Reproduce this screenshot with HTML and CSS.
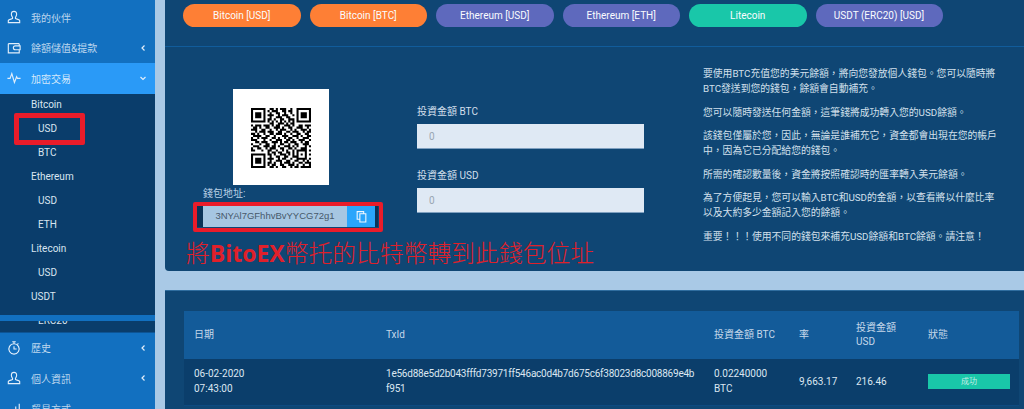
FILE: index.html
```html
<!DOCTYPE html>
<html>
	<head>
		<title>Litecoin</title>
		<meta name="viewport" content="width=device-width, initial-scale=1.0"/>
		<link rel="stylesheet" href="styles.css">
	</head>
	<body>
		<nav class="sidebar">
			<a class="nav-item">
				<svg class="nav-icon" viewBox="0 0 16 16"><path d="M8 1.500c-2 0-3 1.500-3 3.300 0 1.700.8 2.800 1.300 3.500v1.400c-1 .7-4.300 1.100-4.800 2.300v2.500h13v-2.500c-.5-1.200-3.800-1.600-4.800-2.300V8.300c.5-.7 1.300-1.800 1.300-3.500 0-1.800-1-3.300-3-3.300z"/></svg>
				<span>我的伙伴</span>
			</a>
			<a class="nav-item">
				<svg class="nav-icon" viewBox="0 0 16 16"><path d="M1.500 3h12.500M1.500 3v10.500h12.500V10M14 3v2.500M14 5.500H9.500a2.200 2.200 0 0 0 0 4.500H15V5.500z"/></svg>
				<span>餘額儲值&amp;提款</span>
				<svg class="chevron" viewBox="0 0 8 8"><path d="M5.500 1.500 3 4l2.500 2.500"/></svg>
			</a>
			<a class="nav-item active">
				<svg class="nav-icon" viewBox="0 0 16 16"><path d="M.5 8.500h3L5.500 3l3 10 2.500-6.500 1 2h3.500"/></svg>
				<span>加密交易</span>
				<svg class="chevron" viewBox="0 0 8 8"><path d="M1.500 3 4 5.500 6.500 3"/></svg>
			</a>
			<div class="submenu">
				<a class="sub-title">Bitcoin</a>
				<a class="sub-link">USD</a>
				<a class="sub-link">BTC</a>
				<a class="sub-title">Ethereum</a>
				<a class="sub-link">USD</a>
				<a class="sub-link">ETH</a>
				<a class="sub-title">Litecoin</a>
				<a class="sub-link">USD</a>
				<a class="sub-title">USDT</a>
				<a class="sub-link">ERC20</a>
				<div class="sub-strip"></div>
				<div class="sub-mark"></div>
			</div>
			<a class="nav-item">
				<svg class="nav-icon" viewBox="0 0 16 16"><path d="M6 .8h4M8 .8v2.400M12 3.800l1 -1M8 3.200a5.900 5.900 0 1 0 .01 0zM8 6v3.200h3"/></svg>
				<span>歷史</span>
				<svg class="chevron" viewBox="0 0 8 8"><path d="M5.500 1.500 3 4l2.500 2.500"/></svg>
			</a>
			<a class="nav-item">
				<svg class="nav-icon" viewBox="0 0 16 16"><path d="M8 1.500c-2 0-3 1.500-3 3.300 0 1.700.8 2.800 1.300 3.500v1.400c-1 .7-4.300 1.100-4.800 2.300v2.500h13v-2.500c-.5-1.200-3.800-1.600-4.800-2.300V8.300c.5-.7 1.300-1.800 1.300-3.500 0-1.800-1-3.300-3-3.300z"/></svg>
				<span>個人資訊</span>
				<svg class="chevron" viewBox="0 0 8 8"><path d="M5.500 1.500 3 4l2.500 2.500"/></svg>
			</a>
			<a class="nav-item">
				<svg class="nav-icon" viewBox="0 0 16 16"><path d="M2 14v-3M6 14V8M10 14V5M14 14V2"/></svg>
				<span>貿易方式</span>
			</a>
		</nav>

		<main class="content">
			<section class="card deposit">
				<div class="coin-tabs">
					<button class="pill orange">Bitcoin [USD]</button>
					<button class="pill orange">Bitcoin [BTC]</button>
					<button class="pill purple">Ethereum [USD]</button>
					<button class="pill purple">Ethereum [ETH]</button>
					<button class="pill teal">Litecoin</button>
					<button class="pill purple wide">USDT (ERC20) [USD]</button>
				</div>
				<div class="deposit-body">
					<div class="wallet">
						<div class="qr">
							<svg viewBox="0 0 29 29">
								<path transform="translate(0 .5)" d="M0 0h7M9 0h2M12 0h1M14 0h3M19 0h1M22 0h7
									M0 1h1M6 1h1M8 1h1M10 1h3M15 1h2M18 1h2M22 1h1M28 1h1
									M0 2h1M2 2h3M6 2h1M9 2h1M12 2h2M16 2h1M19 2h1M22 2h1M24 2h3M28 2h1
									M0 3h1M2 3h3M6 3h1M8 3h3M13 3h1M15 3h3M20 3h1M22 3h1M24 3h3M28 3h1
									M0 4h1M2 4h3M6 4h1M9 4h1M12 4h3M17 4h2M22 4h1M24 4h3M28 4h1
									M0 5h1M6 5h1M8 5h2M11 5h1M14 5h2M18 5h3M22 5h1M28 5h1
									M0 6h7M8 6h1M10 6h1M12 6h1M14 6h1M16 6h1M18 6h1M20 6h1M22 6h7
									M9 7h2M13 7h3M17 7h1M19 7h2
									M0 8h1M2 8h3M6 8h3M10 8h1M12 8h2M16 8h3M20 8h1M23 8h2M26 8h3
									M1 9h2M4 9h1M7 9h2M11 9h3M15 9h1M18 9h2M22 9h3M27 9h1
									M0 10h3M5 10h2M9 10h1M12 10h1M14 10h3M19 10h1M21 10h1M24 10h3M28 10h1
									M2 11h1M4 11h3M8 11h3M13 11h2M17 11h2M20 11h3M25 11h1M27 11h2
									M0 12h2M3 12h1M6 12h1M9 12h2M12 12h3M16 12h1M19 12h1M22 12h2M26 12h2
									M1 13h4M7 13h2M11 13h1M15 13h3M20 13h3M24 13h1M27 13h2
									M0 14h1M3 14h1M5 14h3M10 14h2M13 14h1M16 14h1M18 14h2M22 14h1M25 14h3
									M0 15h3M6 15h1M9 15h1M12 15h3M17 15h2M20 15h1M23 15h3M28 15h1
									M2 16h2M5 16h3M10 16h3M14 16h1M16 16h2M19 16h3M24 16h1M26 16h2
									M0 17h1M4 17h1M7 17h2M11 17h1M14 17h2M18 17h1M21 17h2M25 17h3
									M1 18h3M6 18h3M10 18h2M13 18h1M16 18h3M20 18h1M22 18h1M26 18h1M28 18h1
									M0 19h1M3 19h2M7 19h1M9 19h3M14 19h2M18 19h2M21 19h1M24 19h3
									M0 20h2M5 20h1M8 20h2M12 20h1M15 20h1M17 20h1M20 20h1M22 20h5M28 20h1
									M8 21h1M10 21h2M13 21h2M17 21h2M20 21h1M22 21h1M26 21h1
									M0 22h7M8 22h2M11 22h1M14 22h3M18 22h1M20 22h1M22 22h1M24 22h1M26 22h1M28 22h1
									M0 23h1M6 23h1M9 23h1M12 23h2M16 23h2M20 23h2M22 23h1M26 23h1
									M0 24h1M2 24h3M6 24h1M8 24h3M13 24h1M15 24h2M19 24h1M22 24h5M28 24h1
									M0 25h1M2 25h3M6 25h1M9 25h1M12 25h3M17 25h2M21 25h2M25 25h1M27 25h1
									M0 26h1M2 26h3M6 26h1M8 26h2M11 26h1M14 26h1M16 26h3M20 26h1M23 26h2M26 26h3
									M0 27h1M6 27h1M8 27h1M10 27h2M14 27h2M18 27h3M22 27h1M25 27h1M28 27h1
									M0 28h7M9 28h2M12 28h1M15 28h2M19 28h1M21 28h2M24 28h3M27 28h2"/>
							</svg>
						</div>
						<label class="wallet-label">錢包地址:</label>
						<div class="address">
							<span class="address-text">3NYAl7GFhhvBvYYCG72g1</span>
							<button class="copy">
								<svg viewBox="0 0 12 12"><path d="M8 3V1.500H2v7h2M4.500 3.500h5.500v7.500H4.500z"/></svg>
							</button>
						</div>
						<div class="mark-box"></div>
					</div>
					<div class="amounts">
						<label>投資金額 BTC</label>
						<input type="text" placeholder="0">
						<label>投資金額 USD</label>
						<input type="text" placeholder="0">
					</div>
					<div class="info">
						<p>要使用BTC充值您的美元餘額，將向您發放個人錢包。您可以隨時將BTC發送到您的錢包，餘額會自動補充。</p>
						<p>您可以隨時發送任何金額，這筆錢將成功轉入您的USD餘額。</p>
						<p>該錢包僅屬於您，因此，無論是誰補充它，資金都會出現在您的帳戶中，因為它已分配給您的錢包。</p>
						<p>所需的確認數量後，資金將按照確認時的匯率轉入美元餘額。</p>
						<p>為了方便起見，您可以輸入BTC和USD的金額，以查看將以什麼比率以及大約多少金額記入您的餘額。</p>
						<p>重要！！！使用不同的錢包來補充USD餘額和BTC餘額。請注意！</p>
					</div>
					<div class="note">將<b>BitoEX</b>幣托的比特幣轉到此錢包位址</div>
				</div>
			</section>

			<section class="card history">
				<table>
					<colgroup>
						<col class="col-date">
						<col class="col-tx">
						<col class="col-amount">
						<col class="col-rate">
						<col class="col-usd">
						<col class="col-status">
					</colgroup>
					<thead>
						<tr>
							<th>日期</th>
							<th>TxId</th>
							<th>投資金額 BTC</th>
							<th>率</th>
							<th>投資金額 USD</th>
							<th>狀態</th>
						</tr>
					</thead>
					<tbody>
						<tr>
							<td>06-02-2020<br>07:43:00</td>
							<td class="txid">1e56d88e5d2b043fffd73971ff546ac0d4b7d675c6f38023d8c008869e4bf951</td>
							<td>0.02240000 BTC</td>
							<td>9,663.17</td>
							<td>216.46</td>
							<td class="status-cell"><span class="status">成功</span></td>
						</tr>
					</tbody>
				</table>
			</section>
		</main>
	</body>
</html>
```

FILE: styles.css
```css
* {
	box-sizing: border-box;
	margin: 0;
	padding: 0;
}
html, body {
	height: 100%;
	overflow: hidden;
}
body {
	display: flex;
	background-color: #a9c9e6;
	font-family: Roboto, "Noto Sans CJK TC", sans-serif;
	font-size: 10px;
	color: #dbe6f1;
}

/* sidebar */
.sidebar {
	flex: none;
	width: 155px;
	height: 100%;
	padding-top: 2px;
	background-color: #1270c0;
	overflow: hidden;
}
.nav-item {
	display: flex;
	align-items: center;
	height: 30.500px;
	padding: 0 8px 0 7px;
	font-size: 10px;
	color: #bcd6ee;
}
.nav-item span {
	flex: 1;
	margin-left: 10px;
}
.nav-item.active {
	background-color: #2a9af7;
	color: #d4e8fb;
}
.nav-icon {
	width: 14px;
	height: 14px;
	fill: none;
	stroke: #e2eefa;
	stroke-width: 1.300;
}
.chevron {
	width: 8px;
	height: 8px;
	fill: none;
	stroke: #e2eefa;
	stroke-width: 1.200;
}
.submenu {
	position: relative;
	height: 239px;
	background-color: #0a3d6b;
	overflow: hidden;
	border-bottom: 1px solid #0d5494;
}
.sub-title, .sub-link {
	display: block;
	height: 24px;
	line-height: 22px;
	padding-left: 31px;
	color: #d9e5f0;
}
.sub-link {
	padding-left: 38px;
}
.sub-strip {
	position: absolute;
	left: 0;
	top: 221px;
	width: 100%;
	height: 6px;
	background-color: #1270c0;
}
.sub-mark {
	position: absolute;
	left: 14px;
	top: 19px;
	width: 71px;
	height: 32px;
	border: 5px solid #ea1c2a;
	border-radius: 2px;
}

/* main column */
.content {
	flex: 1;
	min-width: 0;
	padding-left: 10px;
}
.card {
	background-color: #0f4674;
}
.deposit {
	height: 271px;
	border-bottom-left-radius: 4px;
}
.coin-tabs {
	display: flex;
	gap: 9px;
	height: 47px;
	padding: 4px 0 0 18px;
	border-bottom: 1px solid #115c9b;
}
.pill {
	width: 117.500px;
	height: 23px;
	border: none;
	border-radius: 12px;
	font-family: inherit;
	font-size: 10px;
	color: #fafcff;
}
.pill.wide {
	width: 127px;
}
.orange {
	background-color: #fe7f35;
}
.purple {
	background-color: #5e69bd;
}
.teal {
	background-color: #19c7a9;
}

.deposit-body {
	position: relative;
	display: flex;
	padding-left: 38px;
}
.wallet {
	position: relative;
	flex: none;
	width: 214px;
	padding-top: 42px;
}
.qr {
	width: 96px;
	height: 96px;
	margin-left: 30px;
	padding: 19px 18px;
	background-color: #fff;
}
.qr svg {
	display: block;
	width: 60px;
	height: 60px;
}
.qr path {
	fill: none;
	stroke: #000;
	stroke-width: 1;
}
.wallet-label {
	display: block;
	margin-top: 2px;
	font-size: 10px;
	line-height: 14px;
	color: #b9d0e5;
}
.address {
	display: flex;
	width: 175px;
	height: 22px;
	margin-top: 4px;
	border-right: 3px solid #0a3358;
	box-shadow: -6px 0 0 #0a3358;
}
.address-text {
	flex: 1;
	background-color: #a6c6e2;
	font-family: "Liberation Sans", sans-serif;
	font-size: 9.500px;
	line-height: 22px;
	text-align: center;
	color: #46596b;
}
.copy {
	width: 28px;
	border: none;
	background-color: #2aa5fb;
}
.copy svg {
	display: block;
	width: 13px;
	height: 13px;
	margin: auto;
	fill: none;
	stroke: #f0f8ff;
	stroke-width: 1;
}
.mark-box {
	position: absolute;
	left: -10px;
	top: 155px;
	width: 190px;
	height: 30px;
	border: 4px solid #ea1c2a;
	border-radius: 2px;
}
.amounts {
	flex: none;
	width: 286px;
	padding-top: 58px;
}
.amounts label {
	display: block;
	font-size: 10px;
	line-height: 14px;
	color: #d2dfeb;
}
.amounts input {
	display: block;
	width: 227px;
	height: 25px;
	margin: 5px 0 20px;
	padding-left: 12px;
	border: none;
	border-bottom: 1px solid #7fa0c0;
	background-color: #dfe9f4;
	font-family: inherit;
	font-size: 10px;
}
.amounts input::placeholder {
	color: #99a6b3;
}
.info {
	flex: none;
	width: 300px;
	padding-top: 19px;
	font-size: 9.800px;
	line-height: 15px;
	color: #d3e0ec;
}
.info p {
	margin-bottom: 8.600px;
}
.note {
	position: absolute;
	left: 21px;
	top: 187px;
	font-family: "Noto Sans CJK TC", sans-serif;
	font-size: 23.800px;
	font-weight: 300;
	line-height: 36px;
	color: #e0202a;
	white-space: nowrap;
}
.note b {
	font-family: "Open Sans", sans-serif;
	font-size: 23px;
	font-weight: 700;
}

/* history table */
.history {
	height: 119px;
	margin-top: 19px;
	padding: 20px 5px 0 19px;
	border-top: 1px solid #2f6d9f;
}
table {
	width: 100%;
	table-layout: fixed;
	border-collapse: collapse;
}
.col-date {
	width: 192px;
}
.col-tx {
	width: 328px;
}
.col-amount {
	width: 85px;
}
.col-rate {
	width: 57px;
}
.col-usd {
	width: 72px;
}
th {
	height: 48px;
	padding: 0 10px;
	background-color: #135b99;
	font-weight: 400;
	line-height: 14px;
	text-align: left;
	color: #c5d8ea;
}
td {
	height: 46px;
	padding: 0 10px;
	background-color: #0b3e6b;
	border-bottom: 1px solid #0d4a80;
	line-height: 14.500px;
}
.txid {
	padding-right: 8px;
	letter-spacing: -0.230px;
	word-break: break-all;
}
.status-cell {
	padding-right: 9px;
}
.status {
	display: block;
	height: 15px;
	margin-top: -1px;
	background-color: #19c7a9;
	font-size: 8px;
	line-height: 15px;
	text-align: center;
	color: #c4ece6;
}
```
